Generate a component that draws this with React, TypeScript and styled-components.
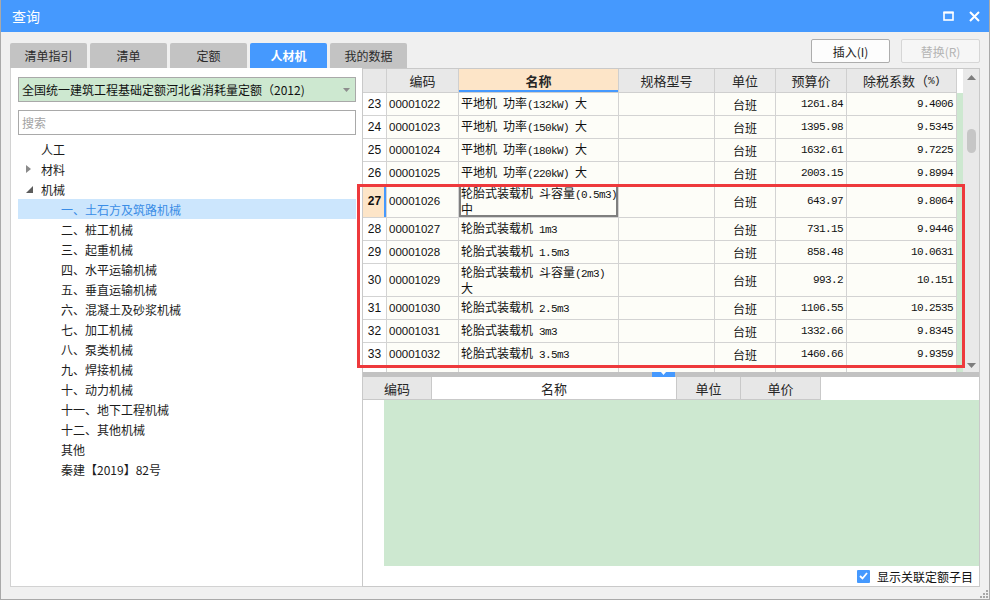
import styled, { createGlobalStyle } from "styled-components";

const cjk = `"Noto Sans CJK SC", "Microsoft YaHei", sans-serif`;

const GlobalStyle = createGlobalStyle`
  html, body {
    margin: 0;
    padding: 0;
    background: #ffffff;
  }
  body {
    font-family: ${cjk};
    font-size: 12px;
    color: #1c1c1c;
  }
  * {
    box-sizing: border-box;
  }
`;

const Window = styled.div`
  position: relative;
  width: 990px;
  height: 600px;
  display: flex;
  flex-direction: column;
  background: #f0f0f0;
  border: 1px solid #a9a9a9;
  border-top: none;
  overflow: hidden;
`;

const TitleBar = styled.div`
  height: 32px;
  flex-shrink: 0;
  display: flex;
  align-items: center;
  justify-content: space-between;
  padding: 0 9px 0 11px;
  background: #4599fe;
  color: #ffffff;
  font-size: 14px;
  line-height: 1;
`;

const TitleIcons = styled.div`
  display: flex;
  align-items: center;
  gap: 15px;
`;

const Toolbar = styled.div`
  height: 36px;
  flex-shrink: 0;
  display: flex;
  justify-content: space-between;
  padding: 0 9px;
`;

const Tabs = styled.div`
  display: flex;
  align-items: flex-end;
  gap: 3px;
`;

const Tab = styled.div<{ $active?: boolean }>`
  width: 77px;
  height: 25px;
  display: flex;
  align-items: center;
  justify-content: center;
  border-radius: 2px 2px 0 0;
  background: ${(p) => (p.$active ? "#4599fe" : "#c3c3c3")};
  color: ${(p) => (p.$active ? "#ffffff" : "#2b2b2b")};
  font-size: 12px;
  font-weight: ${(p) => (p.$active ? 700 : 400)};
`;

const Buttons = styled.div`
  display: flex;
  gap: 11px;
  padding-top: 7px;
`;

const Button = styled.div<{ $disabled?: boolean }>`
  width: 79px;
  height: 24px;
  display: flex;
  align-items: center;
  justify-content: center;
  border: 1px solid ${(p) => (p.$disabled ? "#d6d6d6" : "#adadad")};
  border-radius: 2px;
  background: ${(p) => (p.$disabled ? "#f6f6f6" : "#fdfdfd")};
  color: ${(p) => (p.$disabled ? "#b4b4b4" : "#1c1c1c")};
  font-size: 12px;
`;

const Main = styled.div`
  flex: 1;
  display: flex;
  min-height: 0;
  padding: 0 9px 12px 9px;
`;

const LeftPanel = styled.div`
  width: 352px;
  flex-shrink: 0;
  display: flex;
  flex-direction: column;
  background: #ffffff;
  border-left: 1px solid #d2d2d2;
  border-bottom: 1px solid #d2d2d2;
  padding: 9px 6px 0 7px;
`;

const Select = styled.div`
  height: 25px;
  display: flex;
  align-items: center;
  justify-content: space-between;
  padding: 0 5px 0 3px;
  background: #cde8d0;
  border: 1px solid #a9a9a9;
  font-size: 12px;
  color: #111;
`;

const Search = styled.div`
  height: 25px;
  margin-top: 8px;
  display: flex;
  align-items: center;
  padding: 0 3px;
  border: 1px solid #a9a9a9;
  color: #a3a3a3;
  font-size: 12px;
`;

const Tree = styled.div`
  margin-top: 4px;
  display: flex;
  flex-direction: column;
`;

const TreeRow = styled.div<{ $indent: number; $selected?: boolean }>`
  height: 20px;
  display: flex;
  align-items: center;
  padding-left: ${(p) => p.$indent}px;
  background: ${(p) => (p.$selected ? "#cce6fd" : "transparent")};
  color: ${(p) => (p.$selected ? "#3a8de6" : "#1c1c1c")};
  font-size: 12px;
  white-space: nowrap;
`;

const Toggle = styled.span`
  width: 15px;
  display: flex;
  align-items: center;
`;

const RightPanel = styled.div`
  position: relative;
  flex: 1;
  display: flex;
  flex-direction: column;
  min-width: 0;
  background: #ffffff;
  border: 1px solid #c9c9c9;
`;

const TopArea = styled.div`
  height: 303px;
  display: flex;
  flex-shrink: 0;
`;

const GridArea = styled.div`
  flex: 1;
  overflow: hidden;
  background: #cde8d0;
`;

const cols = "24px 72px 160px 96px 61px 71px 110px";

const HeaderRow = styled.div`
  display: grid;
  grid-template-columns: ${cols};
  height: 24px;
  background: #ffffff;
`;

const HeadCell = styled.div<{ $active?: boolean }>`
  display: flex;
  align-items: center;
  justify-content: center;
  background: ${(p) => (p.$active ? "#fde5c8" : "#e8e8e8")};
  border-right: 1px solid #cfcfcf;
  border-bottom: 1px solid #cfcfcf;
  box-shadow: ${(p) => (p.$active ? "inset 0 -2px 0 #4599fe" : "none")};
  font-size: 13px;
  font-weight: ${(p) => (p.$active ? 700 : 400)};
  color: #262626;
`;

const Row = styled.div<{ $h: number }>`
  display: grid;
  grid-template-columns: ${cols};
  height: ${(p) => p.$h}px;
`;

const Cell = styled.div<{
  $align?: "left" | "center" | "right";
  $num?: boolean;
  $active?: boolean;
  $focus?: boolean;
}>`
  display: flex;
  align-items: center;
  justify-content: ${(p) =>
    p.$align === "right" ? "flex-end" : p.$align === "center" ? "center" : "flex-start"};
  padding: 0 3px 0 ${(p) => (p.$align === "left" ? 2 : 3)}px;
  overflow: hidden;
  white-space: nowrap;
  background: ${(p) => (p.$active ? "#fde5c8" : p.$num ? "#ffffff" : "#fdfdf8")};
  border-right: 1px solid #d3d3d3;
  border-bottom: 1px solid #d3d3d3;
  box-shadow: ${(p) =>
    p.$active ? "inset -2px 0 0 #4599fe" : p.$focus ? "inset 0 0 0 2px #7f7f7f" : "none"};
  font-size: 12px;
  font-weight: ${(p) => (p.$active ? 700 : 400)};
  color: #111;
`;

const NumText = styled.span`
  font-family: "Liberation Sans", Arial, sans-serif;
  font-size: 12px;
`;

const CodeText = styled.span`
  font-family: "Liberation Sans", Arial, sans-serif;
  font-size: 11.5px;
`;

const Lines = styled.div`
  display: flex;
  flex-direction: column;
  line-height: 14px;
`;

const Lat = styled.span`
  font-family: "Liberation Mono", "Courier New", monospace;
  font-size: 11px;
  letter-spacing: -0.6px;
`;

const Scrollbar = styled.div`
  width: 16px;
  flex-shrink: 0;
  display: flex;
  flex-direction: column;
  align-items: center;
  padding: 6px 0 4px;
  background: #e9e9e9;
`;

const Thumb = styled.div`
  width: 9px;
  height: 24px;
  margin-top: 49px;
  border-radius: 5px;
  background: #c6c6c6;
`;

const Track = styled.div`
  flex: 1;
`;

const Splitter = styled.div`
  height: 5px;
  flex-shrink: 0;
  display: flex;
  justify-content: center;
  background: #c2c2c2;
`;

const Handle = styled.div`
  width: 23px;
  margin-left: -16px;
  display: flex;
  justify-content: center;
  background: #4599fe;
`;

const BottomArea = styled.div`
  flex: 1;
  display: flex;
  flex-direction: column;
  min-height: 0;
`;

const SubHeader = styled.div`
  height: 23px;
  display: flex;
  flex-shrink: 0;
`;

const SubHead = styled.div<{ $w: number; $plain?: boolean }>`
  width: ${(p) => p.$w}px;
  display: flex;
  align-items: center;
  justify-content: center;
  background: ${(p) => (p.$plain ? "#ffffff" : "#e7e7e7")};
  border-right: 1px solid #c9c9c9;
  border-bottom: 1px solid #c9c9c9;
  font-size: 13px;
  color: #262626;
`;

const SubBody = styled.div`
  height: 166px;
  padding-left: 21px;
  flex-shrink: 0;
`;

const Green = styled.div`
  height: 100%;
  background: #cde8d0;
`;

const Footer = styled.div`
  flex: 1;
  display: flex;
  align-items: center;
  justify-content: flex-end;
  gap: 7px;
  padding-right: 6px;
  font-size: 12px;
  color: #111;
`;

const Check = styled.span`
  width: 13px;
  height: 13px;
  display: flex;
  align-items: center;
  justify-content: center;
  border-radius: 1px;
  background: #4599fe;
`;

const Highlight = styled.div`
  position: absolute;
  left: -6px;
  top: 115px;
  width: 608px;
  height: 184px;
  border: 3px solid #ee393c;
  pointer-events: none;
`;

const Grip = styled.svg`
  position: absolute;
  right: 1px;
  bottom: 1px;
`;

function Mixed({ text }: { text: string }) {
  const parts = text.split(/([\x20-\x7e]+)/).filter(Boolean);
  return (
    <>
      {parts.map((p, i) =>
        /^[\x20-\x7e]+$/.test(p) ? <Lat key={i}>{p}</Lat> : <span key={i}>{p}</span>
      )}
    </>
  );
}

type Item = {
  no: number;
  code: string;
  name: string[];
  price: string;
  tax: string;
  active?: boolean;
};

const items: Item[] = [
  { no: 23, code: "00001022", name: ["平地机 功率(132kW) 大"], price: "1261.84", tax: "9.4006" },
  { no: 24, code: "00001023", name: ["平地机 功率(150kW) 大"], price: "1395.98", tax: "9.5345" },
  { no: 25, code: "00001024", name: ["平地机 功率(180kW) 大"], price: "1632.61", tax: "9.7225" },
  { no: 26, code: "00001025", name: ["平地机 功率(220kW) 大"], price: "2003.15", tax: "9.8994" },
  { no: 27, code: "00001026", name: ["轮胎式装载机 斗容量(0.5m3)", "中"], price: "643.97", tax: "9.8064", active: true },
  { no: 28, code: "00001027", name: ["轮胎式装载机 1m3"], price: "731.15", tax: "9.9446" },
  { no: 29, code: "00001028", name: ["轮胎式装载机 1.5m3"], price: "858.48", tax: "10.0631" },
  { no: 30, code: "00001029", name: ["轮胎式装载机 斗容量(2m3)", "大"], price: "993.2", tax: "10.151" },
  { no: 31, code: "00001030", name: ["轮胎式装载机 2.5m3"], price: "1106.55", tax: "10.2535" },
  { no: 32, code: "00001031", name: ["轮胎式装载机 3m3"], price: "1332.66", tax: "9.8345" },
  { no: 33, code: "00001032", name: ["轮胎式装载机 3.5m3"], price: "1460.66", tax: "9.9359" },
];

type Node = { label: string; indent: number; toggle?: "open" | "closed"; selected?: boolean };

const tree: Node[] = [
  { label: "人工", indent: 23 },
  { label: "材料", indent: 8, toggle: "closed" },
  { label: "机械", indent: 8, toggle: "open" },
  { label: "一、土石方及筑路机械", indent: 43, selected: true },
  { label: "二、桩工机械", indent: 43 },
  { label: "三、起重机械", indent: 43 },
  { label: "四、水平运输机械", indent: 43 },
  { label: "五、垂直运输机械", indent: 43 },
  { label: "六、混凝土及砂浆机械", indent: 43 },
  { label: "七、加工机械", indent: 43 },
  { label: "八、泵类机械", indent: 43 },
  { label: "九、焊接机械", indent: 43 },
  { label: "十、动力机械", indent: 43 },
  { label: "十一、地下工程机械", indent: 43 },
  { label: "十二、其他机械", indent: 43 },
  { label: "其他", indent: 43 },
  { label: "秦建【2019】82号", indent: 43 },
];

const headers = ["编码", "名称", "规格型号", "单位", "预算价", "除税系数（%)"];

export default function App() {
  return (
    <>
      <GlobalStyle />
      <Window>
        <TitleBar>
          <span>查询</span>
          <TitleIcons>
            <svg width="11" height="10" viewBox="0 0 11 10">
              <rect x="1" y="1.5" width="9" height="7.5" fill="none" stroke="#fff" strokeWidth="1.6" />
              <rect x="0.5" y="0.5" width="10" height="2" fill="#fff" />
            </svg>
            <svg width="11" height="11" viewBox="0 0 11 11">
              <path d="M1 1 L10 10 M10 1 L1 10" stroke="#fff" strokeWidth="2" />
            </svg>
          </TitleIcons>
        </TitleBar>

        <Toolbar>
          <Tabs>
            <Tab>清单指引</Tab>
            <Tab>清单</Tab>
            <Tab>定额</Tab>
            <Tab $active>人材机</Tab>
            <Tab>我的数据</Tab>
          </Tabs>
          <Buttons>
            <Button>插入(I)</Button>
            <Button $disabled>替换(R)</Button>
          </Buttons>
        </Toolbar>

        <Main>
          <LeftPanel>
            <Select>
              <span>全国统一建筑工程基础定额河北省消耗量定额（2012)</span>
              <svg width="7" height="4" viewBox="0 0 7 4">
                <path d="M0 0 H7 L3.5 4 Z" fill="#8d8d8d" />
              </svg>
            </Select>
            <Search>搜索</Search>
            <Tree>
              {tree.map((n) => (
                <TreeRow key={n.label} $indent={n.indent} $selected={n.selected}>
                  {n.toggle && (
                    <Toggle>
                      {n.toggle === "closed" ? (
                        <svg width="5" height="8" viewBox="0 0 5 8">
                          <path d="M0 0 L5 4 L0 8 Z" fill="#8a8a8a" />
                        </svg>
                      ) : (
                        <svg width="7" height="7" viewBox="0 0 7 7">
                          <path d="M7 0 V7 H0 Z" fill="#5c5c5c" />
                        </svg>
                      )}
                    </Toggle>
                  )}
                  {n.label}
                </TreeRow>
              ))}
            </Tree>
          </LeftPanel>

          <RightPanel>
            <TopArea>
              <GridArea>
                <HeaderRow>
                  <HeadCell />
                  {headers.map((h) => (
                    <HeadCell key={h} $active={h === "名称"}>
                      <Mixed text={h} />
                    </HeadCell>
                  ))}
                </HeaderRow>
                {items.map((it) => (
                  <Row key={it.no} $h={it.name.length > 1 ? 33 : 23}>
                    <Cell $align="center" $num $active={it.active}>
                      <NumText>{it.no}</NumText>
                    </Cell>
                    <Cell $align="left">
                      <CodeText>{it.code}</CodeText>
                    </Cell>
                    <Cell $align="left" $focus={it.active}>
                      <Lines>
                        {it.name.map((line) => (
                          <span key={line}>
                            <Mixed text={line} />
                          </span>
                        ))}
                      </Lines>
                    </Cell>
                    <Cell />
                    <Cell $align="center">台班</Cell>
                    <Cell $align="right">
                      <Lat>{it.price}</Lat>
                    </Cell>
                    <Cell $align="right">
                      <Lat>{it.tax}</Lat>
                    </Cell>
                  </Row>
                ))}
                <Row $h={23}>
                  <Cell $num />
                  <Cell />
                  <Cell />
                  <Cell />
                  <Cell />
                  <Cell />
                  <Cell />
                </Row>
              </GridArea>
              <Scrollbar>
                <svg width="9" height="5" viewBox="0 0 9 5">
                  <path d="M0 5 L4.5 0 L9 5 Z" fill="#7d7d7d" />
                </svg>
                <Thumb />
                <Track />
                <svg width="9" height="5" viewBox="0 0 9 5">
                  <path d="M0 0 L9 0 L4.5 5 Z" fill="#7d7d7d" />
                </svg>
              </Scrollbar>
            </TopArea>

            <Splitter>
              <Handle>
                <svg width="5" height="4" viewBox="0 0 5 4">
                  <path d="M0 0 H5 L2.5 3 Z" fill="#fff" />
                </svg>
              </Handle>
            </Splitter>

            <BottomArea>
              <SubHeader>
                <SubHead $w={69}>编码</SubHead>
                <SubHead $w={245} $plain>
                  名称
                </SubHead>
                <SubHead $w={64}>单位</SubHead>
                <SubHead $w={80}>单价</SubHead>
              </SubHeader>
              <SubBody>
                <Green />
              </SubBody>
              <Footer>
                <Check>
                  <svg width="9" height="8" viewBox="0 0 9 8">
                    <path d="M1 4 L3.5 6.5 L8 1" fill="none" stroke="#fff" strokeWidth="1.8" />
                  </svg>
                </Check>
                <span>显示关联定额子目</span>
              </Footer>
            </BottomArea>

            <Highlight />
          </RightPanel>
        </Main>

        <Grip width="8" height="8" viewBox="0 0 8 8">
          {[
            [6, 0],
            [6, 3],
            [3, 3],
            [6, 6],
            [3, 6],
            [0, 6],
          ].map(([x, y]) => (
            <rect key={`${x}-${y}`} x={x} y={y} width="2" height="2" fill="#a8a8a8" />
          ))}
        </Grip>
      </Window>
    </>
  );
}
